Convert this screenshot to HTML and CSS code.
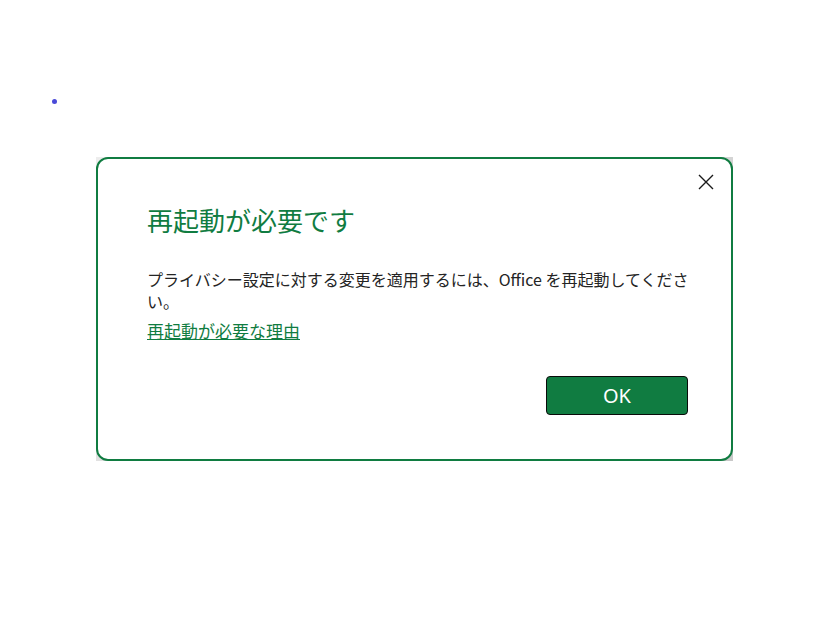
FILE: index.html
```html
<!DOCTYPE html>
<html lang="ja">
<head>
<meta charset="utf-8">
<link rel="stylesheet" href="styles.css">
</head>
<body>
<div class="page">
  <span class="dot"></span>
  <div class="dialog-shell">
    <div class="dialog">
      <button class="close" aria-label="閉じる">
        <svg width="16" height="16" viewBox="0 0 16 16"><path d="M1 1L15 15M15 1L1 15" stroke="#1a1a1a" stroke-width="1.4" fill="none"/></svg>
      </button>
      <h1 class="title">再起動が必要です</h1>
      <p class="message">プライバシー設定に対する変更を適用するには、Office を再起動してください。</p>
      <a class="link" href="#">再起動が必要な理由</a>
      <div class="actions">
        <button class="ok">OK</button>
      </div>
    </div>
  </div>
</div>
</body>
</html>
```

FILE: styles.css
```css
html, body {
  margin: 0;
  padding: 0;
  background: #ffffff;
}
body {
  font-family: "Noto Sans CJK JP", "Noto Sans", sans-serif;
}
.page {
  display: flex;
  flex-direction: column;
  align-items: flex-start;
}
.dot {
  display: block;
  width: 5px;
  height: 5px;
  border-radius: 50%;
  background: #4a4ad8;
  margin: 99px 0 0 52px;
}
.dialog-shell {
  margin: 53px 0 0 96px;
  width: 637px;
  height: 304px;
  box-sizing: border-box;
  background: linear-gradient(135deg, #ededed 0%, #c8c8c8 100%);
  display: flex;
}
.dialog {
  position: relative;
  flex: 1;
  min-width: 0;
  box-sizing: border-box;
  background: #ffffff;
  border: 2px solid #107c41;
  border-radius: 12px;
  padding: 44px 43px 0 49px;
  display: flex;
  flex-direction: column;
  align-items: flex-start;
}
.close {
  position: absolute;
  top: 14px;
  right: 16px;
  width: 18px;
  height: 18px;
  padding: 0;
  border: none;
  background: transparent;
  display: flex;
  align-items: center;
  justify-content: center;
}
.title {
  margin: 0;
  font-size: 26px;
  line-height: 34px;
  font-weight: 400;
  color: #107c41;
}
.message {
  margin: 31px 0 0;
  width: 545px;
  font-size: 16px;
  line-height: 22px;
  color: #242424;
}
.link {
  margin-top: 8px;
  font-size: 17px;
  line-height: 22px;
  color: #107c41;
  text-decoration: underline;
}
.actions {
  align-self: stretch;
  display: flex;
  justify-content: flex-end;
  margin-top: 34px;
}
.ok {
  width: 142px;
  height: 39px;
  background: #107c41;
  border: 1px solid #0a0a0a;
  border-radius: 4px;
  color: #ffffff;
  font-family: "Noto Sans", sans-serif;
  font-size: 20px;
}
```
